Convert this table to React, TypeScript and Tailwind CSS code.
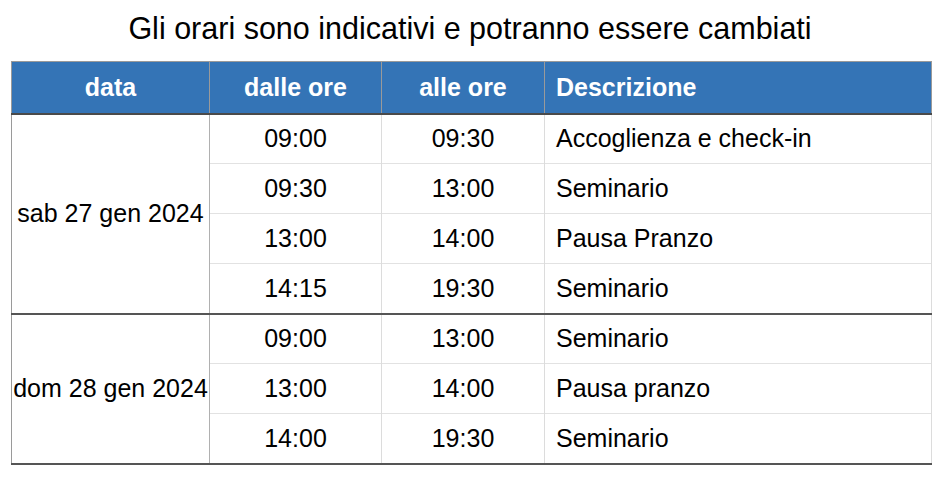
const giorni = [
  {
    data: "sab 27 gen 2024",
    righe: [
      ["09:00", "09:30", "Accoglienza e check-in"],
      ["09:30", "13:00", "Seminario"],
      ["13:00", "14:00", "Pausa Pranzo"],
      ["14:15", "19:30", "Seminario"],
    ],
  },
  {
    data: "dom 28 gen 2024",
    righe: [
      ["09:00", "13:00", "Seminario"],
      ["13:00", "14:00", "Pausa pranzo"],
      ["14:00", "19:30", "Seminario"],
    ],
  },
];

export default function App() {
  return (
    <div className="w-[940px] h-[480px] bg-white text-black font-['Liberation_Sans',Arial,sans-serif]">
      <h1 className="pt-[10px] h-[61px] text-center text-[30.5px] leading-[36px]">
        Gli orari sono indicativi e potranno essere cambiati
      </h1>
      <div className="px-[11px]">
        <table className="w-[921px] table-fixed border-collapse text-[25px]">
          <colgroup>
            <col className="w-[198px]" />
            <col className="w-[172px]" />
            <col className="w-[163px]" />
            <col />
          </colgroup>
          <thead>
            <tr className="h-[52px] bg-[#3474b6] text-white font-bold border-b-2 border-b-[#4a4a4a]">
              <th className="border border-[#9a9a9a] font-bold">data</th>
              <th className="border border-[#9a9a9a] font-bold">dalle ore</th>
              <th className="border border-[#9a9a9a] font-bold">alle ore</th>
              <th className="border border-[#9a9a9a] font-bold text-left pl-[11px]">Descrizione</th>
            </tr>
          </thead>
          {giorni.map((g) => (
            <tbody key={g.data} className="border-b-2 border-b-[#555]">
              {g.righe.map((r, i) => (
                <tr key={i} className="h-[50px]">
                  {i === 0 && (
                    <td
                      rowSpan={g.righe.length}
                      className="border-l border-r border-l-[#9a9a9a] border-r-[#b0b0b0] text-center whitespace-nowrap px-0"
                    >
                      {g.data}
                    </td>
                  )}
                  <td className="border-r border-r-[#dcdcdc] border-t border-t-[#e2e2e2] text-center">{r[0]}</td>
                  <td className="border-r border-r-[#dcdcdc] border-t border-t-[#e2e2e2] text-center">{r[1]}</td>
                  <td className="border-r border-r-[#dcdcdc] border-t border-t-[#e2e2e2] pl-[11px]">{r[2]}</td>
                </tr>
              ))}
            </tbody>
          ))}
        </table>
      </div>
    </div>
  );
}
